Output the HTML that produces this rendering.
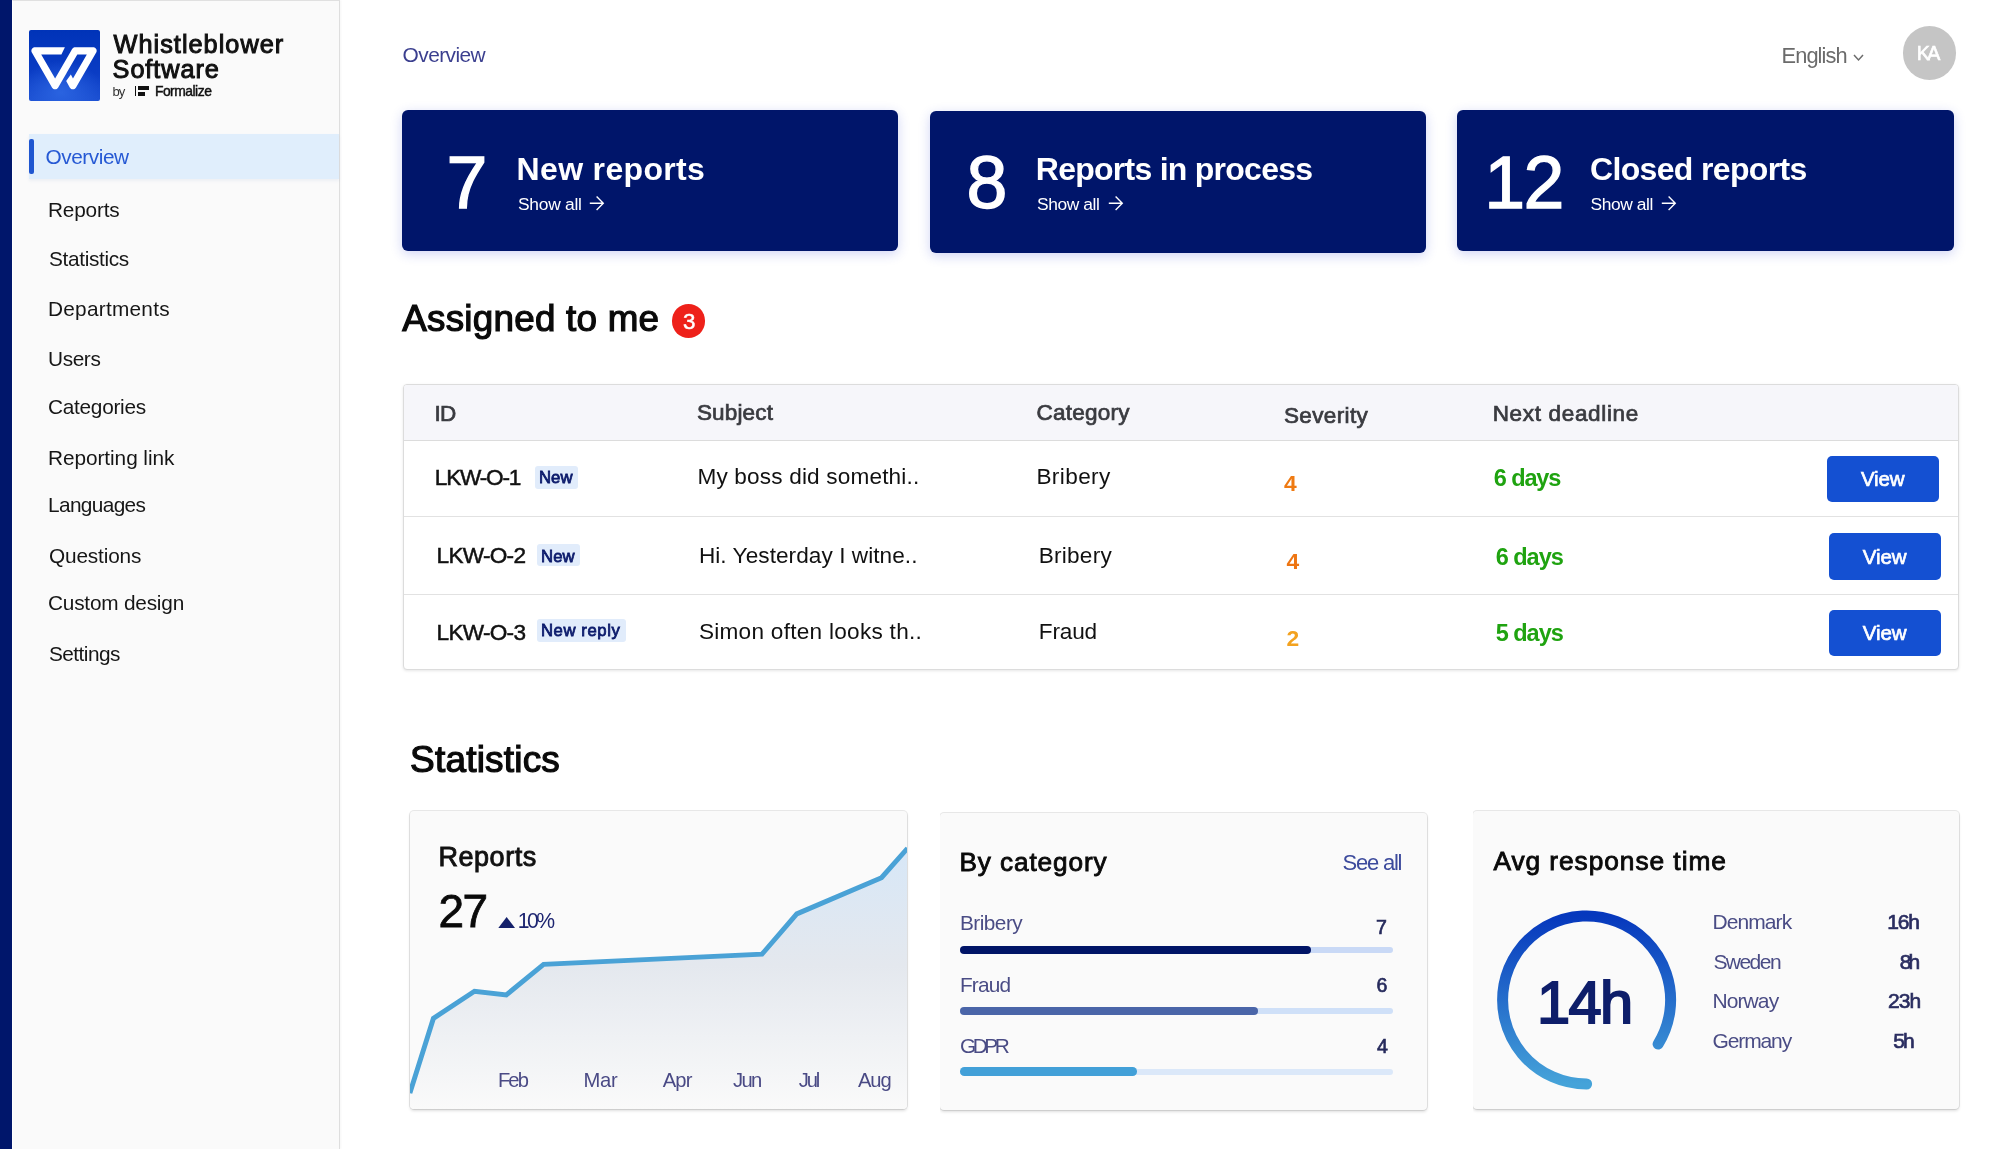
<!DOCTYPE html>
<html lang="en"><head><meta charset="utf-8"><title>Whistleblower Software - Overview</title>
<style>
html,body{margin:0;padding:0}
body{width:2000px;height:1149px;overflow:hidden;background:#fff;position:relative;font-family:"Liberation Sans",sans-serif}
.a{position:absolute;box-sizing:border-box}
.t{position:absolute;white-space:nowrap;line-height:0;font-family:"Liberation Sans",sans-serif;-webkit-font-smoothing:antialiased}
.txt{position:absolute;left:0;top:0;width:2000px;height:1149px;will-change:transform}
.navy{background:#00156a;border-radius:6px;box-shadow:0 3px 12px rgba(40,60,210,0.22)}
.scard{background:#fafafa;border-radius:4px;box-shadow:0 0 0 1px rgba(0,0,0,0.09),0 2px 3px rgba(0,0,0,0.13)}
.btn{background:#1450d2;border-radius:5px}
.badge{background:#e1ecfb;border-radius:3px}
</style></head>
<body>
<!-- left strip -->
<div class="a" style="left:0;top:0;width:12px;height:1149px;background:#00166b"></div>
<!-- sidebar -->
<div class="a" style="left:12px;top:0;width:328px;height:1149px;background:#fafafa;border-left:1px solid #fff;border-right:1px solid #dedede;border-top:1px solid #e0e0e0;box-shadow:1px 0 2px rgba(0,0,0,0.04)"></div>
<!-- logo -->
<div class="a" style="left:29px;top:30px;width:71px;height:71px;border-radius:2px;background:radial-gradient(ellipse 60% 45% at 45% 88%, #2a63e0 0%, rgba(42,99,224,0) 100%),linear-gradient(180deg,#0033b8 0%,#0a3cc4 60%,#1b4fd2 100%)"></div>
<svg class="a" style="left:29px;top:30px" width="71" height="71" viewBox="0 0 71 71">
  <path d="M4.63,17.46 4.02,17.77 3.49,18.19 3.04,18.71 2.70,19.30 2.47,19.95 2.37,20.63 2.41,21.31 2.57,21.98 2.85,22.60 22.98,57.50 23.38,58.06 23.87,58.53 24.45,58.90 25.09,59.15 25.76,59.28 26.44,59.28 27.11,59.15 27.75,58.90 28.33,58.53 28.82,58.06 29.22,57.50 35.13,47.26 35.15,47.29 37.75,42.79 37.68,42.82 48.31,24.40 57.84,24.40 43.97,48.38 41.85,44.53 37.19,50.99 40.75,57.44 41.14,58.01 41.63,58.49 42.21,58.88 42.84,59.14 43.52,59.28 44.21,59.29 44.89,59.16 45.53,58.91 46.11,58.54 46.62,58.06 47.02,57.50 67.20,22.60 67.48,21.98 67.64,21.31 67.68,20.63 67.58,19.95 67.36,19.31 67.01,18.71 66.56,18.20 66.03,17.77 65.42,17.46 64.76,17.27 64.08,17.20 46.23,17.20 45.48,17.28 44.77,17.51 44.11,17.89 43.55,18.39 43.11,19.00 40.00,24.40 40.00,24.32 39.96,24.40 40.00,24.40 26.10,48.49 12.20,24.40 32.40,24.40 35.90,17.20 5.97,17.20 5.29,17.27 4.63,17.46Z" fill="#fff" fill-rule="evenodd"/>
</svg>
<!-- formalize icon -->
<div class="a" style="left:135px;top:86.3px;width:1.3px;height:9.6px;background:#111"></div>
<div class="a" style="left:137.7px;top:86.3px;width:11.4px;height:4.2px;background:#111"></div>
<div class="a" style="left:137.7px;top:91.7px;width:7.2px;height:4.2px;background:#111"></div>
<!-- menu highlight -->
<div class="a" style="left:29px;top:133.5px;width:310px;height:45.5px;background:#e0eefc;box-shadow:0 2px 3px rgba(120,150,200,0.10)"></div>
<div class="a" style="left:29px;top:138.5px;width:4.5px;height:35px;border-radius:2px;background:#1f56d0"></div>

<!-- top bar -->
<svg class="a" style="left:1852px;top:52px" width="13" height="11" viewBox="0 0 13 11"><polyline points="2,3 6.5,8 11,3" fill="none" stroke="#6b6b6b" stroke-width="1.5"/></svg>
<div class="a" style="left:1902.5px;top:26px;width:53.5px;height:53.5px;border-radius:50%;background:#c5c5c5"></div>

<!-- summary cards -->
<div class="a navy" style="left:402px;top:109.5px;width:496px;height:141.5px"></div>
<div class="a navy" style="left:930px;top:111px;width:495.5px;height:141.5px"></div>
<div class="a navy" style="left:1457px;top:109.5px;width:496.5px;height:141.5px"></div>
<svg class="a" style="left:588px;top:196px" width="18" height="17" viewBox="0 0 18 17"><path d="M1.8 7.2H15.3M8.6 0.5L15.3 7.2L8.6 13.9" fill="none" stroke="#fff" stroke-width="1.35"/></svg>
<svg class="a" style="left:1107px;top:196px" width="18" height="17" viewBox="0 0 18 17"><path d="M1.8 7.2H15.3M8.6 0.5L15.3 7.2L8.6 13.9" fill="none" stroke="#fff" stroke-width="1.35"/></svg>
<svg class="a" style="left:1660px;top:196px" width="18" height="17" viewBox="0 0 18 17"><path d="M1.8 7.2H15.3M8.6 0.5L15.3 7.2L8.6 13.9" fill="none" stroke="#fff" stroke-width="1.35"/></svg>

<!-- assigned badge -->
<div class="a" style="left:671.5px;top:304px;width:33.5px;height:33.5px;border-radius:50%;background:#ee211a"></div>

<!-- table -->
<div class="a" style="left:403px;top:384px;width:1556px;height:285.5px;border:1px solid #dcdcdc;border-radius:4px;background:#fff;box-shadow:0 1px 3px rgba(0,0,0,0.10)"></div>
<div class="a" style="left:404px;top:385px;width:1554px;height:55.5px;background:#f6f6fa;border-bottom:1px solid #dcdcdc;border-radius:3px 3px 0 0"></div>
<div class="a" style="left:404px;top:515.5px;width:1554px;height:1px;background:#e2e2e2"></div>
<div class="a" style="left:404px;top:593.5px;width:1554px;height:1px;background:#e2e2e2"></div>
<div class="a badge" style="left:535px;top:466px;width:43px;height:22.5px"></div>
<div class="a badge" style="left:537px;top:544px;width:42.5px;height:22.2px"></div>
<div class="a badge" style="left:537px;top:619.4px;width:89px;height:22.2px"></div>
<div class="a btn" style="left:1826.6px;top:455.6px;width:112.4px;height:46.5px"></div>
<div class="a btn" style="left:1829px;top:533px;width:112px;height:46.8px"></div>
<div class="a btn" style="left:1829px;top:610px;width:112px;height:46.2px"></div>

<!-- stat cards -->
<div class="a scard" style="left:409.5px;top:811.3px;width:497.2px;height:298px;overflow:hidden">
  <svg style="position:absolute;left:0;top:0" width="498" height="298" viewBox="409.5 811.3 498 298">
    <defs>
      <linearGradient id="cf" x1="0" y1="0" x2="0" y2="1">
        <stop offset="0" stop-color="#d7e7f7"/>
        <stop offset="0.45" stop-color="#e4e8ee"/>
        <stop offset="1" stop-color="#fafafa"/>
      </linearGradient>
    </defs>
    <polygon points="409.4,1093.4 432.9,1018.7 474,991.5 505.8,995.2 543.1,964.6 761.5,954.5 796.3,914.2 881,878 907,848.6 907,1110 409.4,1110" fill="url(#cf)"/>
    <polyline points="409.4,1093.4 432.9,1018.7 474,991.5 505.8,995.2 543.1,964.6 761.5,954.5 796.3,914.2 881,878 907,848.6" fill="none" stroke="#4aa2d6" stroke-width="4.9" stroke-linejoin="miter"/>
  </svg>
</div>
<svg class="a" style="left:497px;top:915px" width="20" height="15" viewBox="0 0 20 15"><polygon points="1.3,13 9.65,2 18,13" fill="#14206a"/></svg>
<div class="a scard" style="left:940px;top:812.5px;width:487.4px;height:297.5px;clip-path:inset(-10px -10px -10px 0)"></div>
<div class="a scard" style="left:1473px;top:811.3px;width:486.4px;height:298px;clip-path:inset(-10px -10px -10px 0)"></div>
<!-- bars -->
<div class="a" style="left:960px;top:947px;width:432.5px;height:6px;border-radius:3px;background:#c9d9f6"></div>
<div class="a" style="left:960px;top:945.7px;width:350.5px;height:8.6px;border-radius:4.3px;background:#001466"></div>
<div class="a" style="left:960px;top:1008px;width:432.5px;height:6px;border-radius:3px;background:#cfe0f8"></div>
<div class="a" style="left:960px;top:1006.7px;width:298px;height:8.6px;border-radius:4.3px;background:#4a65a8"></div>
<div class="a" style="left:960px;top:1068.7px;width:432.5px;height:6px;border-radius:3px;background:#dbe8f9"></div>
<div class="a" style="left:960px;top:1067.4px;width:177.4px;height:8.6px;border-radius:4.3px;background:#42a0d8"></div>
<!-- gauge -->
<svg class="a" style="left:1486px;top:900px" width="200" height="200" viewBox="1486 900 200 200">
  <defs>
    <linearGradient id="gg" x1="0" y1="0" x2="0" y2="1">
      <stop offset="0" stop-color="#0638bd"/>
      <stop offset="1" stop-color="#45a3d9"/>
    </linearGradient>
  </defs>
  <path d="M1586.6 1084.0 A84 84 0 1 1 1658.1 1044.1" fill="none" stroke="url(#gg)" stroke-width="11" stroke-linecap="round"/>
</svg>

<div class="txt">
<div class="t" style="left:113.6px;top:44px;font-size:25.3px;color:#111;letter-spacing:1.01px;-webkit-text-stroke:1.0px #111;">Whistleblower</div>
<div class="t" style="left:112.6px;top:69px;font-size:25.3px;color:#111;letter-spacing:0.91px;-webkit-text-stroke:1.0px #111;">Software</div>
<div class="t" style="left:112.5px;top:92px;font-size:13.1px;color:#333;letter-spacing:-1.08px;">by</div>
<div class="t" style="left:154.9px;top:91px;font-size:13.9px;color:#111;letter-spacing:-0.50px;-webkit-text-stroke:0.46px #111;">Formalize</div>
<div class="t" style="left:45.6px;top:157px;font-size:20.8px;color:#2659d4;letter-spacing:-0.46px;">Overview</div>
<div class="t" style="left:48.0px;top:210px;font-size:20.8px;color:#161616;letter-spacing:-0.20px;">Reports</div>
<div class="t" style="left:49.0px;top:259px;font-size:20.8px;color:#161616;letter-spacing:-0.33px;">Statistics</div>
<div class="t" style="left:48.0px;top:309px;font-size:20.8px;color:#161616;letter-spacing:0.25px;">Departments</div>
<div class="t" style="left:48.0px;top:359px;font-size:20.8px;color:#161616;letter-spacing:-0.38px;">Users</div>
<div class="t" style="left:48.0px;top:407px;font-size:20.8px;color:#161616;letter-spacing:-0.27px;">Categories</div>
<div class="t" style="left:48.0px;top:458px;font-size:20.8px;color:#161616;letter-spacing:-0.06px;">Reporting link</div>
<div class="t" style="left:48.0px;top:505px;font-size:20.8px;color:#161616;letter-spacing:-0.62px;">Languages</div>
<div class="t" style="left:49.0px;top:556px;font-size:20.8px;color:#161616;letter-spacing:-0.15px;">Questions</div>
<div class="t" style="left:48.0px;top:603px;font-size:20.8px;color:#161616;letter-spacing:-0.21px;">Custom design</div>
<div class="t" style="left:49.0px;top:654px;font-size:20.8px;color:#161616;letter-spacing:-0.54px;">Settings</div>
<div class="t" style="left:402.6px;top:55px;font-size:20.9px;color:#3b3f8f;letter-spacing:-0.57px;">Overview</div>
<div class="t" style="left:1781.5px;top:56px;font-size:21.8px;color:#6b6b6b;letter-spacing:-0.89px;">English</div>
<div class="t" style="left:1916.8px;top:53px;font-size:19.6px;color:#ffffff;letter-spacing:-2.72px;-webkit-text-stroke:0.65px #ffffff;">KA</div>
<div class="t" style="left:446.6px;top:183px;font-size:73.5px;color:#fff;-webkit-text-stroke:1.3px #fff;">7</div>
<div class="t" style="left:516.6px;top:169px;font-size:32px;color:#fff;font-weight:bold;letter-spacing:0.33px;">New reports</div>
<div class="t" style="left:518.0px;top:204px;font-size:17.4px;color:#fff;letter-spacing:-0.27px;">Show all</div>
<div class="t" style="left:966.6px;top:183px;font-size:73.5px;color:#fff;-webkit-text-stroke:1.3px #fff;">8</div>
<div class="t" style="left:1035.8px;top:169px;font-size:32px;color:#fff;font-weight:bold;letter-spacing:-0.74px;">Reports in process</div>
<div class="t" style="left:1037.0px;top:204px;font-size:17.4px;color:#fff;letter-spacing:-0.41px;">Show all</div>
<div class="t" style="left:1484.2px;top:183px;font-size:73.5px;color:#fff;letter-spacing:-1.68px;-webkit-text-stroke:1.3px #fff;">12</div>
<div class="t" style="left:1590.0px;top:169px;font-size:32px;color:#fff;font-weight:bold;letter-spacing:-0.66px;">Closed reports</div>
<div class="t" style="left:1590.5px;top:204px;font-size:17.4px;color:#fff;letter-spacing:-0.41px;">Show all</div>
<div class="t" style="left:402.3px;top:319px;font-size:36.8px;color:#0a0a0a;letter-spacing:0.24px;-webkit-text-stroke:1.21px #0a0a0a;">Assigned to me</div>
<div class="t" style="left:683.0px;top:322px;font-size:22.3px;color:#fff;-webkit-text-stroke:0.5px #fff;">3</div>
<div class="t" style="left:434.5px;top:414px;font-size:22.5px;color:#3a3b40;letter-spacing:-0.79px;-webkit-text-stroke:0.74px #3a3b40;">ID</div>
<div class="t" style="left:696.9px;top:413px;font-size:22.5px;color:#3a3b40;letter-spacing:0.16px;-webkit-text-stroke:0.74px #3a3b40;">Subject</div>
<div class="t" style="left:1036.5px;top:413px;font-size:22.5px;color:#3a3b40;letter-spacing:0.26px;-webkit-text-stroke:0.74px #3a3b40;">Category</div>
<div class="t" style="left:1284.0px;top:416px;font-size:22.5px;color:#3a3b40;letter-spacing:0.35px;-webkit-text-stroke:0.74px #3a3b40;">Severity</div>
<div class="t" style="left:1492.7px;top:414px;font-size:22.5px;color:#3a3b40;letter-spacing:0.67px;-webkit-text-stroke:0.74px #3a3b40;">Next deadline</div>
<div class="t" style="left:434.8px;top:478px;font-size:22.6px;color:#111;letter-spacing:-1.20px;-webkit-text-stroke:0.5px #111;">LKW-O-1</div>
<div class="t" style="left:538.9px;top:478px;font-size:16.7px;color:#0b1a6b;letter-spacing:0.18px;-webkit-text-stroke:0.8px #0b1a6b;">New</div>
<div class="t" style="left:697.5px;top:477px;font-size:22.6px;color:#111;letter-spacing:0.16px;">My boss did somethi..</div>
<div class="t" style="left:1036.4px;top:477px;font-size:22.6px;color:#111;letter-spacing:0.39px;">Bribery</div>
<div class="t" style="left:1283.9px;top:483px;font-size:22.8px;color:#ef7a12;font-weight:bold;">4</div>
<div class="t" style="left:1493.8px;top:478px;font-size:23.5px;color:#1fa310;font-weight:bold;letter-spacing:-1.12px;">6 days</div>
<div class="t" style="left:1861.0px;top:479px;font-size:20.5px;color:#fff;letter-spacing:-0.21px;-webkit-text-stroke:0.68px #fff;">View</div>
<div class="t" style="left:436.6px;top:556px;font-size:22.6px;color:#111;letter-spacing:-0.73px;-webkit-text-stroke:0.5px #111;">LKW-O-2</div>
<div class="t" style="left:541.0px;top:557px;font-size:16.7px;color:#0b1a6b;letter-spacing:0.13px;-webkit-text-stroke:0.8px #0b1a6b;">New</div>
<div class="t" style="left:698.9px;top:556px;font-size:22.6px;color:#111;letter-spacing:0.06px;">Hi. Yesterday I witne..</div>
<div class="t" style="left:1038.8px;top:556px;font-size:22.6px;color:#111;letter-spacing:0.22px;">Bribery</div>
<div class="t" style="left:1286.5px;top:561px;font-size:22.8px;color:#ee7512;font-weight:bold;">4</div>
<div class="t" style="left:1495.7px;top:557px;font-size:23.5px;color:#1fa310;font-weight:bold;letter-spacing:-1.02px;">6 days</div>
<div class="t" style="left:1862.8px;top:557px;font-size:20.5px;color:#fff;letter-spacing:-0.11px;-webkit-text-stroke:0.68px #fff;">View</div>
<div class="t" style="left:436.6px;top:633px;font-size:22.6px;color:#111;letter-spacing:-0.73px;-webkit-text-stroke:0.5px #111;">LKW-O-3</div>
<div class="t" style="left:541.0px;top:631px;font-size:16.7px;color:#0b1a6b;letter-spacing:0.57px;-webkit-text-stroke:0.8px #0b1a6b;">New reply</div>
<div class="t" style="left:698.9px;top:632px;font-size:22.6px;color:#111;letter-spacing:0.27px;">Simon often looks th..</div>
<div class="t" style="left:1038.8px;top:632px;font-size:22.6px;color:#111;letter-spacing:-0.16px;">Fraud</div>
<div class="t" style="left:1286.5px;top:638px;font-size:22.8px;color:#f3a21f;font-weight:bold;">2</div>
<div class="t" style="left:1495.7px;top:633px;font-size:23.5px;color:#1fa310;font-weight:bold;letter-spacing:-1.02px;">5 days</div>
<div class="t" style="left:1862.8px;top:633px;font-size:20.5px;color:#fff;letter-spacing:-0.11px;-webkit-text-stroke:0.68px #fff;">View</div>
<div class="t" style="left:410.1px;top:760px;font-size:37px;color:#0a0a0a;letter-spacing:0.19px;-webkit-text-stroke:1.22px #0a0a0a;">Statistics</div>
<div class="t" style="left:438.4px;top:857px;font-size:27px;color:#111;letter-spacing:0.55px;-webkit-text-stroke:0.89px #111;">Reports</div>
<div class="t" style="left:438.4px;top:911px;font-size:46px;color:#0a0a0a;letter-spacing:-1.38px;-webkit-text-stroke:0.8px #0a0a0a;">27</div>
<div class="t" style="left:517.8px;top:921px;font-size:21.2px;color:#1c2470;letter-spacing:-2.53px;">10%</div>
<div class="t" style="left:497.9px;top:1080px;font-size:20.2px;color:#4a4a85;letter-spacing:-1.88px;">Feb</div>
<div class="t" style="left:583.4px;top:1080px;font-size:20.2px;color:#4a4a85;letter-spacing:-0.22px;">Mar</div>
<div class="t" style="left:662.7px;top:1080px;font-size:20.2px;color:#4a4a85;letter-spacing:-0.85px;">Apr</div>
<div class="t" style="left:733.0px;top:1080px;font-size:20.2px;color:#4a4a85;letter-spacing:-1.66px;">Jun</div>
<div class="t" style="left:798.8px;top:1080px;font-size:20.2px;color:#4a4a85;letter-spacing:-2.16px;">Jul</div>
<div class="t" style="left:858.0px;top:1080px;font-size:20.2px;color:#4a4a85;letter-spacing:-1.10px;">Aug</div>
<div class="t" style="left:959.4px;top:862px;font-size:26.2px;color:#0a0a0a;letter-spacing:0.90px;-webkit-text-stroke:0.86px #0a0a0a;">By category</div>
<div class="t" style="left:1342.5px;top:863px;font-size:22px;color:#3c4a9c;letter-spacing:-1.21px;">See all</div>
<div class="t" style="left:960.0px;top:923px;font-size:20.8px;color:#4a4c85;letter-spacing:-0.53px;">Bribery</div>
<div class="t" style="left:1375.9px;top:927px;font-size:19.6px;color:#262a5c;-webkit-text-stroke:0.65px #262a5c;">7</div>
<div class="t" style="left:960.0px;top:985px;font-size:20.8px;color:#4a4c85;letter-spacing:-0.84px;">Fraud</div>
<div class="t" style="left:1376.5px;top:985px;font-size:19.6px;color:#262a5c;-webkit-text-stroke:0.65px #262a5c;">6</div>
<div class="t" style="left:960.0px;top:1046px;font-size:20.8px;color:#4a4c85;letter-spacing:-3.42px;">GDPR</div>
<div class="t" style="left:1376.9px;top:1046px;font-size:19.6px;color:#262a5c;-webkit-text-stroke:0.65px #262a5c;">4</div>
<div class="t" style="left:1493.4px;top:861px;font-size:26.3px;color:#0a0a0a;letter-spacing:0.95px;-webkit-text-stroke:0.87px #0a0a0a;">Avg response time</div>
<div class="t" style="left:1536.9px;top:1003px;font-size:59.6px;color:#0e1e6a;letter-spacing:-1.58px;-webkit-text-stroke:1.97px #0e1e6a;">14h</div>
<div class="t" style="left:1712.4px;top:922px;font-size:21px;color:#4a4c85;letter-spacing:-0.90px;">Denmark</div>
<div class="t" style="left:1887.3px;top:922px;font-size:21px;color:#2a2d60;letter-spacing:-1.22px;-webkit-text-stroke:0.69px #2a2d60;">16h</div>
<div class="t" style="left:1713.4px;top:962px;font-size:21px;color:#4a4c85;letter-spacing:-1.54px;">Sweden</div>
<div class="t" style="left:1899.8px;top:962px;font-size:21px;color:#2a2d60;letter-spacing:-2.87px;-webkit-text-stroke:0.69px #2a2d60;">8h</div>
<div class="t" style="left:1712.4px;top:1001px;font-size:21px;color:#4a4c85;letter-spacing:-0.88px;">Norway</div>
<div class="t" style="left:1887.9px;top:1001px;font-size:21px;color:#2a2d60;letter-spacing:-0.82px;-webkit-text-stroke:0.69px #2a2d60;">23h</div>
<div class="t" style="left:1712.4px;top:1041px;font-size:21px;color:#4a4c85;letter-spacing:-1.09px;">Germany</div>
<div class="t" style="left:1893.3px;top:1041px;font-size:21px;color:#2a2d60;letter-spacing:-1.87px;-webkit-text-stroke:0.69px #2a2d60;">5h</div>
</div>
</body></html>
